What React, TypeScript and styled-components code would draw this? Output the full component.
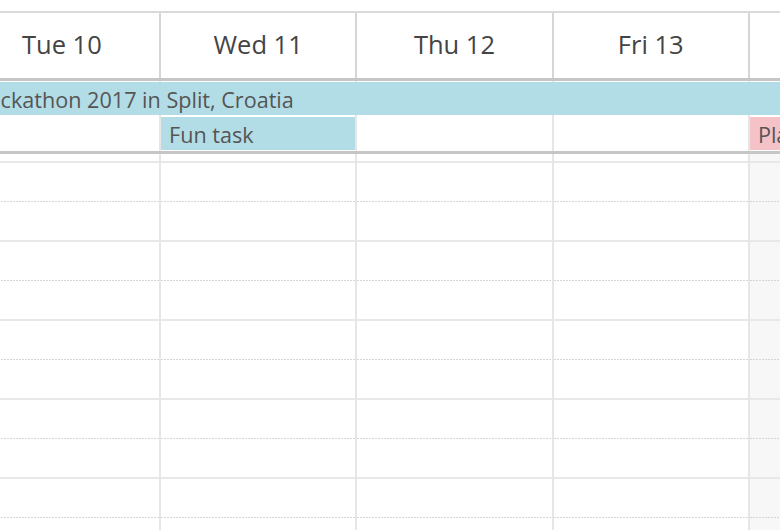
import React from "react";
import styled, { createGlobalStyle, css } from "styled-components";

const COL = 196.3;
const SLOT = 39.55;

const GlobalStyle = createGlobalStyle`
  html, body { margin: 0; padding: 0; overflow: hidden; background: #fff; }
  body { font-family: "Open Sans", "Liberation Sans", sans-serif; }
`;

const Viewport = styled.div`
  width: 780px;
  height: 530px;
  overflow: hidden;
  background: #fff;
`;

const Calendar = styled.div`
  margin-left: -35.3px;
  padding-top: 11px;
  width: ${COL * 5}px;
`;

const Header = styled.div`
  display: grid;
  grid-template-columns: repeat(5, ${COL}px);
  border-top: 2px solid #dadada;
  border-bottom: 3px solid #c6c6c6;
`;

const HeaderCell = styled.div`
  height: 65px;
  box-sizing: border-box;
  padding-bottom: 3px;
  display: flex;
  align-items: center;
  justify-content: center;
  border-right: 2px solid #d6d6d6;
  font-size: 25.5px;
  color: #444;
  white-space: nowrap;
`;

const AllDay = styled.div`
  display: grid;
  grid-template-columns: repeat(5, ${COL}px);
  grid-template-rows: 35px 35px;
  border-bottom: 3px solid #c6c6c6;
`;

const AllDayCell = styled.div<{ $col: number }>`
  grid-column: ${(p) => p.$col};
  grid-row: 1 / -1;
  border-right: 2px solid #e6e6e6;
`;

const Event = styled.div<{ $bg: string; $from: number; $to: number; $row: number }>`
  grid-column: ${(p) => `${p.$from} / ${p.$to}`};
  grid-row: ${(p) => p.$row};
  align-self: start;
  height: 33px;
  box-sizing: border-box;
  margin: 1px 2px 0 0;
  padding: 3px 8px 0;
  background: ${(p) => p.$bg};
  color: #555;
  font-size: 21.6px;
  line-height: 30px;
  white-space: nowrap;
  overflow: hidden;
  z-index: 1;
`;

const TimeGrid = styled.div`
  display: grid;
  grid-template-columns: repeat(5, ${COL}px);
`;

const DayColumn = styled.div<{ $weekend?: boolean }>`
  background: ${(p) => (p.$weekend ? "#f7f7f7" : "#fff")};
  border-right: 2px solid #e6e6e6;
  padding-top: 7px;
`;

const Slot = styled.div<{ $minor?: boolean }>`
  height: ${SLOT}px;
  box-sizing: border-box;
  ${(p) =>
    p.$minor
      ? css`
          background-image: linear-gradient(to right, #d6d6d6 2px, transparent 2px);
          background-size: 3px 1px;
          background-repeat: repeat-x;
          background-position: 0 0;
        `
      : css`
          border-top: 2px solid #e8e8e8;
        `}
`;

const days = ["Tue 10", "Wed 11", "Thu 12", "Fri 13", "Sat 14"];

export default function App() {
  const slots = Array.from({ length: 12 }, (_, i) => i);
  return (
    <Viewport>
      <GlobalStyle />
      <Calendar>
        <Header>
          {days.map((d) => (
            <HeaderCell key={d}>{d}</HeaderCell>
          ))}
        </Header>
        <AllDay>
          {days.map((d, i) => (
            <AllDayCell key={d} $col={i + 1} />
          ))}
          <Event $bg="#b3dde6" $from={1} $to={6} $row={1}>
            Hackathon 2017 in Split, Croatia
          </Event>
          <Event $bg="#b3dde6" $from={2} $to={3} $row={2}>
            Fun task
          </Event>
          <Event $bg="#f5c2c7" $from={5} $to={6} $row={2}>
            Planning
          </Event>
        </AllDay>
        <TimeGrid>
          {days.map((d, i) => (
            <DayColumn key={d} $weekend={i === 4}>
              {slots.map((s) => (
                <Slot key={s} $minor={s % 2 === 1} />
              ))}
            </DayColumn>
          ))}
        </TimeGrid>
      </Calendar>
    </Viewport>
  );
}
